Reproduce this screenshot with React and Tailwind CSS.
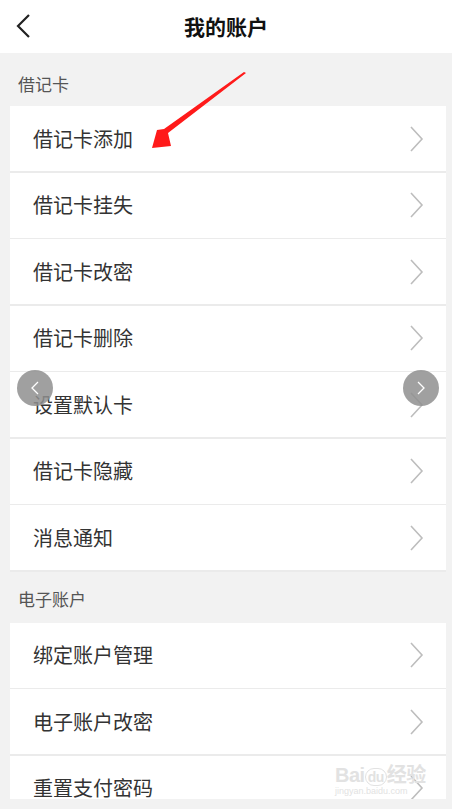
import React from "react";

const Chevron = () => (
  <svg width="16" height="28" viewBox="0 0 16 28" className="shrink-0">
    <path d="M2 2 L13 14 L2 26" fill="none" stroke="#bdbdbd" strokeWidth="1.6" />
  </svg>
);

const Row = ({ label }) => (
  <div className="h-[65px] bg-white flex items-center justify-between pl-[23px] pr-[21px]">
    <span className="text-[20px] text-[#333]">{label}</span>
    <Chevron />
  </div>
);

const Section = ({ title, items, labelClass }) => (
  <div>
    <div className={`flex items-end pl-[18px] text-[17px] text-[#555] ${labelClass}`}>{title}</div>
    <div className="ml-[10px] mr-[6px] flex flex-col gap-[1.5px] bg-[#ebebeb] pb-[1.5px]">
      {items.map((t) => (
        <Row key={t} label={t} />
      ))}
    </div>
  </div>
);

export default function App() {
  return (
    <div
      className="relative w-[452px] h-[809px] bg-[#f2f2f2] overflow-hidden"
      style={{ fontFamily: '"Noto Sans CJK SC", "Noto Sans", sans-serif' }}
    >
      <div className="h-[799px] overflow-hidden">
        <div className="h-[53px] bg-white flex items-center justify-center relative">
          <svg width="18" height="26" viewBox="0 0 18 26" className="absolute left-[14px] top-[13px]">
            <path d="M15 2 L4 13 L15 24" fill="none" stroke="#222" strokeWidth="2.2" />
          </svg>
          <span className="text-[21px] font-bold text-[#111]">我的账户</span>
        </div>
        <Section
          title="借记卡"
          labelClass="h-[53px] pb-[10px]"
          items={["借记卡添加", "借记卡挂失", "借记卡改密", "借记卡删除", "设置默认卡", "借记卡隐藏", "消息通知"]}
        />
        <Section title="电子账户" labelClass="h-[51px] pb-[11px]" items={["绑定账户管理", "电子账户改密", "重置支付密码"]} />
      </div>

      {/* red annotation arrow */}
      <svg className="absolute left-0 top-0 pointer-events-none" width="452" height="809">
        <path d="M246 73 L168 133 L171 146 L152 148 L157 130 L164 129 L244 72 Z" fill="#ff1a1a" />
      </svg>

      {/* gallery nav circles */}
      <div className="absolute left-[17px] top-[370px] w-[36px] h-[36px] rounded-full bg-[#8f8f8f]/85 flex items-center justify-center">
        <svg width="10" height="16" viewBox="0 0 10 16">
          <path d="M8 2 L2 8 L8 14" fill="none" stroke="#fff" strokeWidth="1.3" />
        </svg>
      </div>
      <div className="absolute left-[403px] top-[370px] w-[36px] h-[36px] rounded-full bg-[#8f8f8f]/85 flex items-center justify-center">
        <svg width="10" height="16" viewBox="0 0 10 16">
          <path d="M2 2 L8 8 L2 14" fill="none" stroke="#fff" strokeWidth="1.3" />
        </svg>
      </div>

      {/* watermark */}
      <div className="absolute left-[335px] top-[765px] text-[#e2e2e2] leading-none pointer-events-none">
        <div className="text-[20px] font-bold tracking-tight" style={{ fontFamily: '"Liberation Sans", "Noto Sans CJK SC", sans-serif' }}>
          Bai<span className="text-[14px] border border-[#e2e2e2] rounded-full px-[2px]">du</span>经验
        </div>
        <div className="text-[9px] mt-[2px]" style={{ fontFamily: '"Liberation Sans", sans-serif' }}>jingyan.baidu.com</div>
      </div>
    </div>
  );
}
